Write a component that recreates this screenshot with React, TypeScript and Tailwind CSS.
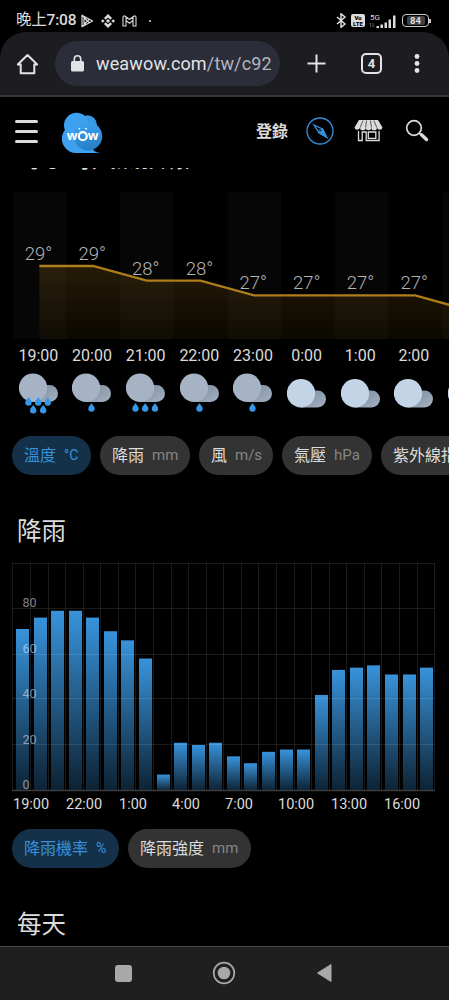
import React from 'react';

type Weather = 'heavy' | 'rain' | 'drizzle' | 'cloud';

interface Hour {
  time?: string;
  temp: number;
  weather: Weather;
}

const COL = 53.67;
const RAIN_STEP = 17.57;

const hours: Hour[] = [
  { time: '19:00', temp: 29, weather: 'heavy' },
  { time: '20:00', temp: 29, weather: 'drizzle' },
  { time: '21:00', temp: 28, weather: 'rain' },
  { time: '22:00', temp: 28, weather: 'drizzle' },
  { time: '23:00', temp: 27, weather: 'drizzle' },
  { time: '0:00', temp: 27, weather: 'cloud' },
  { time: '1:00', temp: 27, weather: 'cloud' },
  { time: '2:00', temp: 27, weather: 'cloud' },
  // off screen, only its edge peeks in
  { temp: 26, weather: 'cloud' },
];

const rain = [71, 76, 79, 79, 76, 70, 66, 58, 7, 21, 20, 21, 15, 12, 17, 18, 18, 42, 53, 54, 55, 51, 51, 54];
const rainLabels = ['19:00', '22:00', '1:00', '4:00', '7:00', '10:00', '13:00', '16:00'];

// [x, y] of each drop's tip
const drops: Record<Weather, number[][]> = {
  heavy: [[10, 25], [19.7, 25], [29.3, 25], [14.7, 32.7], [24.7, 32.7]],
  rain: [[10, 31], [19.7, 31], [29.5, 31]],
  drizzle: [[20, 31]],
  cloud: [],
};

const StatusBar = () => (
  <div className="flex h-8 shrink-0 items-end justify-between bg-black pl-4 pr-[18px] text-[#dcdcdc]">
    <div className="flex h-[23px] items-center">
      <span className="w-[60px] whitespace-nowrap text-[15.5px] leading-[23px] tracking-[-0.2px]">
        晚上<span className="font-medium">7:08</span>
      </span>
      <svg className="ml-1 h-[14px] w-[14px]" viewBox="0 0 14 14" fill="none" stroke="currentColor" strokeWidth="1.2" strokeLinejoin="round">
        <path d="M2 1.2 12.6 7 2 12.8ZM2 1.2 9.5 9M2 12.8 9.5 5M4 4.5v5L8 7Z" />
      </svg>
      <svg className="ml-[7px] h-[14px] w-[14px]" viewBox="0 0 14 14" fill="currentColor">
        <path d="m7 0 4 4-1.700 1.700L7 3.400 4.700 5.700 3 4ZM7 14l4-4-1.700-1.700L7 10.600 4.700 8.300 3 10ZM7 5 9 7 7 9 5 7ZM1.800 5.200 3.600 7 1.800 8.800 0 7ZM12.200 5.200 14 7l-1.800 1.800L10.400 7Z" />
      </svg>
      <svg className="ml-[7px] h-[12px] w-[15px]" viewBox="0 0 15 12" fill="none" stroke="currentColor" strokeWidth="1.1" strokeLinejoin="round">
        <path d="M1 11V2.200C1 .8 2.400.6 3.200 1.200L7.500 4.500l4.300-3.300c.8-.6 2.200-.4 2.200 1V11h-3V5.500L7.500 8.200 4 5.500V11ZM4 5.500V2M11 5.500V2" />
      </svg>
      <span className="ml-[12px] h-[2px] w-[2px] rounded-full bg-[#dcdcdc]" />
    </div>
    <div className="flex h-[23px] items-center">
      <svg className="-ml-[2px] h-[15px] w-[11px]" viewBox="0 0 11 15" fill="none" stroke="currentColor" strokeWidth="1.5">
        <path d="m1 4 8 7-4 3.300V.8L9 4l-8 7" />
      </svg>
      <span className="ml-[4px] flex h-[13px] w-[14px] flex-col items-center justify-center rounded-[2px] bg-[#dcdcdc] text-[6px] font-black leading-[5.5px] text-black">
        <span>Vo</span>
        <span>LTE</span>
      </span>
      <svg className="ml-[4px] h-[16px] w-[28px]" viewBox="0 0 28 16" fill="currentColor">
        <text x="1" y="7" fontSize="8">5G</text>
        <path d="M1.500 10v4M.3 11.300l1.200-1.300M4 10v4l1.200-1.300" fill="none" stroke="#777" strokeWidth=".7" />
        <path d="M7.500 13H10v2H7.500zM11.500 11.500H14V15h-2.500zM15.500 9.500H18V15h-2.500zM19.500 6.500H22V15h-2.500zM24 2.500h2.500V15H24z" />
      </svg>
      <span className="ml-[5px] flex h-[13px] w-[27px] items-center justify-center rounded-[4px] border border-[#c8c8c8] p-[1px]">
        <span className="flex h-full w-[18px] items-center justify-center rounded-[2px] bg-[#404040] text-[9.5px] font-bold leading-none">84</span>
      </span>
      <span className="h-1 w-[2px] bg-[#c8c8c8]" />
    </div>
  </div>
);

const BrowserBar = () => (
  <div className="h-[65px] shrink-0 bg-black">
    <div className="flex h-full items-center rounded-t-[26px] border-b-2 border-[#37363d] bg-[#1d1c21] pl-[17px] text-[#e3e2e6]">
      <svg className="h-[22px] w-[21px]" viewBox="0 0 21 22" fill="none" stroke="currentColor" strokeWidth="2" strokeLinejoin="round">
        <path d="M.8 11.500 10.500 2l9.700 9.500H17.300v8.800H3.700v-8.800Z" />
      </svg>
      <div className="ml-[17px] flex h-[45px] w-[225px] items-center rounded-full bg-[#2b2d39] pl-4">
        <svg className="h-[17px] w-[13px]" viewBox="0 0 13 17" fill="currentColor">
          <path d="M3.300 7V4a3.200 3.200 0 0 1 6.400 0v3" fill="none" stroke="currentColor" strokeWidth="1.600" />
          <rect y="6" width="13" height="10.500" rx="1.500" />
        </svg>
        <span className="ml-3 whitespace-nowrap pt-px text-[18px] leading-[24px] tracking-[0.15px]">
          weawow.com<span className="text-[#b5b5bf]">/tw/c92</span>
        </span>
      </div>
      <svg className="ml-[27px] h-[19px] w-[19px]" viewBox="0 0 19 19" stroke="currentColor" strokeWidth="2">
        <path d="M9.500.5v18M.5 9.500h18" />
      </svg>
      <span className="ml-[35px] flex h-[21px] w-[21px] items-center justify-center rounded-[5px] border-2 border-[#e3e2e6] text-[13px] font-bold leading-none">4</span>
      <svg className="ml-[32px] h-[19px] w-[6px]" viewBox="0 0 6 19" fill="currentColor">
        <circle cx="3" cy="2.500" r="2.400" />
        <circle cx="3" cy="9.500" r="2.400" />
        <circle cx="3" cy="16.500" r="2.400" />
      </svg>
    </div>
  </div>
);

const Logo = () => (
  <svg className="ml-[24px] h-[42px] w-[42px]" viewBox="0 0 42 42">
    <defs>
      <linearGradient id="logo-shade" x1="0" y1="0" x2=".2" y2="1">
        <stop offset=".1" stopColor="#3da1ef" />
        <stop offset="1" stopColor="#2580c8" />
      </linearGradient>
    </defs>
    <circle cx="25.500" cy="12.500" r="9.300" fill="#3798e4" />
    <g fill="#3da1ef">
      <circle cx="14.500" cy="13.300" r="12.500" />
      <path d="M14 12.500A14 14 0 0 0 14 41h24c-3-.4-5-1.300-6.500-2.700L22 16Z" />
    </g>
    <circle cx="26" cy="24.300" r="14.200" fill="url(#logo-shade)" />
    <g fill="#fff" fontWeight="700" className="font-['Open_Sans']">
      <text x="4.700" y="28" fontSize="12.500">w</text>
      <text x="25.700" y="28" fontSize="12.500">w</text>
    </g>
    <circle cx="20.800" cy="24.200" r="4" fill="none" stroke="#fff" strokeWidth="2.200" />
    <circle cx="17.300" cy="16.700" r=".9" fill="#fff" />
    <circle cx="24" cy="16.700" r=".9" fill="#fff" />
  </svg>
);

const Header = () => (
  <header className="flex h-[71px] shrink-0 items-center bg-black pl-[15px] text-[#dcdcdc]">
    <div className="flex w-[23px] flex-col gap-[7px] pb-[2px]">
      <span className="h-[3px] rounded-full bg-[#dcdcdc]" />
      <span className="h-[3px] rounded-full bg-[#dcdcdc]" />
      <span className="h-[3px] rounded-full bg-[#dcdcdc]" />
    </div>
    <Logo />
    <span className="ml-[152px] pb-[2px] text-[16px] font-bold leading-none">登錄</span>
    <svg className="-mt-[4px] ml-[18px] h-[28px] w-[28px]" viewBox="0 0 28 28" fill="none" stroke="#3591dc" strokeWidth="1.300">
      <circle cx="14" cy="14" r="13" />
      <path d="m8 8 8.500 4 4 8-7.500-4.300Z" />
      <path d="m16.500 12 4 8-7.500-4.300Z" fill="#3591dc" />
      <circle cx="14.300" cy="13.500" r="1.100" fill="#000" strokeWidth=".8" />
    </svg>
    <svg className="-mt-[4px] ml-[20px] h-[23px] w-[29px]" viewBox="0 0 29 23">
      <path d="M5 1h19l4.500 7.500a2.800 2.800 0 0 1-5.500 0 2.800 2.800 0 0 1-5.700 0 2.800 2.800 0 0 1-5.600 0 2.800 2.800 0 0 1-5.700 0 2.800 2.800 0 0 1-5.500 0Z" fill="#dcdcdc" />
      <path d="M9 1.500 6.200 8.500M12.500 1.500l-.9 7M16.500 1.500l.9 7M20 1.500 22.800 8.500" stroke="#000" strokeWidth=".6" />
      <path d="M4.500 12v9.500h3.700V13h4v8.500h12.900V12M14.300 13h7.500v6.300h-7.500Z" fill="none" stroke="#dcdcdc" strokeWidth="1.300" />
    </svg>
    <svg className="-mt-[4px] ml-[22px] h-[23px] w-[24px]" viewBox="0 0 24 23" fill="none" stroke="#dcdcdc">
      <circle cx="9" cy="9" r="7.300" strokeWidth="1.700" />
      <path d="m14 14 2.500 2.200" strokeWidth="1.700" />
      <path d="m16.500 15.800 5 4.700" strokeWidth="3.400" strokeLinecap="round" />
    </svg>
  </header>
);

const WeatherIcon = ({ weather }: { weather: Weather }) => {
  const clear = weather === 'cloud';
  return (
    <svg className="h-[42px] w-[40px]" viewBox="0.5 0 40 42">
      <defs>
        <linearGradient id="cloud-back" x1="0" y1="0" x2="1" y2="1">
          <stop offset=".2" stopColor="#8090a2" />
          <stop offset="1" stopColor="#a6b3c4" />
        </linearGradient>
      </defs>
      <g transform={clear ? 'translate(0 5.500)' : undefined}>
        <path d="M14 29h17a8.500 8.500 0 1 0 0-17H20Z" fill="url(#cloud-back)" />
        <circle cx="14.500" cy="14.700" r="14.200" fill={clear ? '#c4d4e7' : '#a5b3c5'} />
      </g>
      {drops[weather].map(([x, y]) => (
        <path key={`${x}-${y}`} d={`M${x} ${y - 1}c1 2 3.200 3.500 3.200 5.500a3.200 3.200 0 0 1-6.400 0c0-2 2.200-3.500 3.200-5.500Z`} fill="#3797e8" />
      ))}
    </svg>
  );
};

const HourlyChart = () => {
  const points = hours.map((h, i) => [27.4 + i * COL, 74 + (29 - h.temp) * 14.7]);
  const line = points.map(([x, y]) => `${x},${y}`).join(' ');
  return (
    <svg className="block h-[147px] w-[490px]" viewBox="0 0 490 147">
      <defs>
        <linearGradient id="temp-fill" gradientUnits="userSpaceOnUse" x1="0" y1="74" x2="0" y2="147">
          <stop offset="0" stopColor="#251a06" />
          <stop offset="1" stopColor="#0b0800" />
        </linearGradient>
      </defs>
      <polygon points={`27.4,147 ${line} 457,147`} fill="url(#temp-fill)" />
      {hours.map((h, i) => i % 2 === 0 && (
        <rect key={i} x={0.8 + i * COL} width={COL} height="147" fill="#fff" fillOpacity=".025" />
      ))}
      <polyline points={line} fill="none" stroke="#ad7e1b" strokeWidth="2.300" />
      {hours.map((h, i) => h.time && (
        <text key={i} x={26.5 + i * COL} y={points[i][1] - 6} textAnchor="middle" fontSize="18.5" className="fill-[#b4b4b4] font-light">
          {h.temp}°
        </text>
      ))}
    </svg>
  );
};

interface PillProps {
  label: string;
  unit?: string;
  active?: boolean;
  className: string;
}

const Pill = ({ label, unit, active, className }: PillProps) => (
  <button
    className={`flex h-[39px] shrink-0 items-center whitespace-nowrap rounded-full pl-3 text-[16px] ${
      active ? 'bg-[#143149] text-[#3792de]' : 'bg-[#333333] text-[#dcdcdc]'
    } ${className}`}
  >
    {label}
    {unit && <span className={`ml-2 ${active ? 'text-[14px]' : 'text-[15px] text-[#858585]'}`}>{unit}</span>}
  </button>
);

const RainChart = () => (
  <svg className="block h-[229px] w-[424px]" viewBox="0 0 424 229">
    <defs>
      <linearGradient id="rain-fill" x1="0" y1="0" x2="0" y2="1">
        <stop offset="0" stopColor="#3893db" />
        <stop offset="1" stopColor="#0d2233" />
      </linearGradient>
    </defs>
    {rain.map((v, i) => {
      const height = v * 2.275;
      return <rect key={i} x={Math.floor(4.5 + i * RAIN_STEP)} y={227.5 - height} width="13" height={height} fill="url(#rain-fill)" />;
    })}
    <g stroke="#fff" strokeOpacity=".1" shapeRendering="crispEdges">
      {Array.from({ length: 25 }, (_, i) => (
        <path key={i} d={`M${Math.floor(0.9 + i * RAIN_STEP) + 0.5} 0V227`} />
      ))}
      {[0.5, 45.5, 91.5, 135.5, 181.5].map(y => (
        <path key={y} d={`M0 ${y}H423`} />
      ))}
    </g>
    <path d="M0 227.500H423" stroke="#3b3d40" strokeWidth="1.500" />
    {[80, 60, 40, 20, 0].map((v, i) => (
      <text key={v} x="10.500" y={44 + i * 45.5} fontSize="12.5" className="fill-white/50">{v}</text>
    ))}
  </svg>
);

const NavBar = () => (
  <nav className="flex h-[54px] shrink-0 items-center border-t border-[#484848] bg-[#1f1f1f] pl-[115px]">
    <span className="mb-px h-[17px] w-[17px] rounded-[3px] bg-[#a8a8a8]" />
    <svg className="mb-px ml-[80px] h-[24px] w-[24px]" viewBox="0 0 24 24">
      <circle cx="12" cy="12" r="10.300" fill="none" stroke="#a8a8a8" strokeWidth="1.700" />
      <circle cx="12" cy="12" r="6.300" fill="#a8a8a8" />
    </svg>
    <svg className="mb-px ml-[80px] h-[20px] w-[16px]" viewBox="0 0 16 20">
      <path d="M15 1.500v17L1.500 10Z" fill="#a8a8a8" stroke="#a8a8a8" strokeLinejoin="round" />
    </svg>
  </nav>
);

export default function App() {
  return (
    <div className="flex h-[1000px] w-[449px] flex-col overflow-hidden bg-black font-[Roboto,'Noto_Sans_CJK_TC',sans-serif] text-[#dcdcdc]">
      <StatusBar />
      <BrowserBar />
      <Header />
      <main className="flex min-h-0 flex-1 flex-col overflow-hidden">
        {/* heading is scrolled half under the sticky header */}
        <div className="flex h-6 shrink-0 items-start overflow-hidden pl-[18px]">
          <h2 className="-mt-[25px] text-[24.5px] leading-[32px]">每小時天氣預報</h2>
        </div>
        <section className="h-[244px] shrink-0 overflow-hidden pl-3">
          <HourlyChart />
          <div className="flex w-[490px]">
            {hours.map((h, i) => (
              <div key={i} className="flex w-[53.67px] shrink-0 flex-col items-center">
                <span className="-ml-px mt-[5px] h-[29px] text-[16px] leading-6">{h.time}</span>
                <WeatherIcon weather={h.weather} />
              </div>
            ))}
          </div>
        </section>
        <div className="flex h-[39px] shrink-0 gap-[9px] overflow-hidden pl-3">
          <Pill label="溫度" unit="°C" active className="w-[79px]" />
          <Pill label="降雨" unit="mm" className="w-[90px]" />
          <Pill label="風" unit="m/s" className="w-[74px]" />
          <Pill label="氣壓" unit="hPa" className="w-[90px]" />
          <Pill label="紫外線指數" className="w-[110px]" />
        </div>
        <h2 className="ml-[17px] mt-[41px] h-[47px] shrink-0 text-[24.5px] leading-[32px]">降雨</h2>
        <div className="shrink-0 pl-3">
          <RainChart />
        </div>
        <div className="ml-[13px] grid h-[37px] w-[424px] shrink-0 grid-cols-8 text-[14.5px] leading-[26px]">
          {rainLabels.map(label => (
            <span key={label}>{label}</span>
          ))}
        </div>
        <div className="flex shrink-0 gap-[9px] pl-3">
          <Pill label="降雨機率" unit="%" active className="w-[107px]" />
          <Pill label="降雨強度" unit="mm" className="w-[123px]" />
        </div>
        <h2 className="ml-[17px] mt-[41px] shrink-0 text-[24.5px] leading-[32px]">每天</h2>
      </main>
      <NavBar />
    </div>
  );
}
